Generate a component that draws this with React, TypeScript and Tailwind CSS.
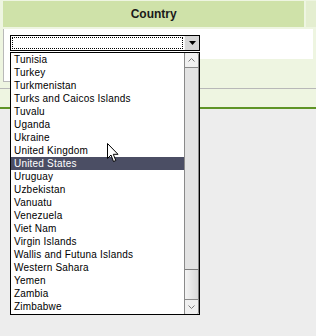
import React from "react";

const countries = [
  "Tunisia",
  "Turkey",
  "Turkmenistan",
  "Turks and Caicos Islands",
  "Tuvalu",
  "Uganda",
  "Ukraine",
  "United Kingdom",
  "United States",
  "Uruguay",
  "Uzbekistan",
  "Vanuatu",
  "Venezuela",
  "Viet Nam",
  "Virgin Islands",
  "Wallis and Futuna Islands",
  "Western Sahara",
  "Yemen",
  "Zambia",
  "Zimbabwe",
];

function Chevron({ up }: { up?: boolean }) {
  return (
    <svg width="7" height="4" viewBox="0 0 7 4" className="block">
      <path
        d={up ? "M0.5 3.5 L3.5 0.5 L6.5 3.5" : "M0.5 0.5 L3.5 3.5 L6.5 0.5"}
        fill="none"
        stroke="#7a7a7a"
        strokeWidth="1"
      />
    </svg>
  );
}

export default function App() {
  return (
    <div className="relative w-[316px] h-[336px] overflow-hidden bg-[#ededed] font-['Liberation_Sans',Arial,sans-serif] text-black">
      {/* table region */}
      <div className="h-[109px] bg-[#eef5e1] border-b-2 border-[#5f9426] pt-[1px] pl-[3px] flex flex-col">
        <div className="flex gap-[2px]">
          <div className="w-[310px] h-[26px] bg-[#cfe2a9] flex items-center justify-center text-[12px] font-bold text-[#1a1a1a]">
            Country
          </div>
          <div className="w-[10px] h-[26px] bg-[#e4eed0]" />
        </div>
        <div className="mt-[2px] w-[310px] h-[30px] bg-white border-l border-[#b9b9b9] pt-[6px] pl-[6px]">
          {/* closed select */}
          <div className="w-[190px] h-[16px] border border-black bg-white flex">
            <div className="flex-1 m-[1px] border border-dotted border-black" />
            <div className="w-[15px] h-full bg-[#d6d6d6] border-l border-[#f4f4f4] flex items-center justify-center">
              <svg width="7" height="4" viewBox="0 0 7 4">
                <path d="M0 0 L7 0 L3.5 4 Z" fill="#000" />
              </svg>
            </div>
          </div>
        </div>
        <div className="w-[7px] h-[23px] bg-white border-l border-b border-[#b9b9b9]" />
        <div className="mt-[6px] h-px bg-[#b8b8b8] -ml-[3px]" />
      </div>

      {/* open list */}
      <div className="absolute left-[10px] top-[52px] w-[190px] h-[263px] border border-black bg-white flex">
        <div className="flex-1 flex flex-col">
          {countries.map((c) => (
            <div
              key={c}
              className={
                "h-[13px] pl-[3px] pt-[1px] text-[10px] leading-[12px] tracking-[0.2px] whitespace-nowrap " +
                (c === "United States" ? "bg-[#4b4e64] text-white" : "")
              }
            >
              {c}
            </div>
          ))}
        </div>
        <div className="w-[15px] h-full border-l border-[#8a8a8a] bg-[#e3e3e3] flex flex-col">
          <div className="h-[15px] bg-[#f0f0f0] border-b border-r border-[#8a8a8a] rounded-t-[2px] flex items-center justify-center">
            <Chevron up />
          </div>
          <div className="flex-1 border-r border-[#8a8a8a]" />
          <div className="h-[30px] border-t border-r border-[#7d7d7d] bg-gradient-to-r from-[#f3f3f3] via-[#e6e6e6] to-[#d9d9d9]" />
          <div className="h-[15px] bg-[#f0f0f0] border-t border-r border-[#8a8a8a] rounded-b-[2px] flex items-center justify-center">
            <Chevron />
          </div>
        </div>
      </div>

      {/* mouse pointer */}
      <svg
        className="absolute left-[107px] top-[143px]"
        width="13"
        height="20"
        viewBox="0 0 13 20"
      >
        <path
          d="M0.5 0.5 L0.5 15.5 L4 12 L6.5 18.5 L8.8 17.5 L6.3 11.3 L11 11.3 Z"
          fill="#fff"
          stroke="#000"
          strokeWidth="1"
          strokeLinejoin="miter"
        />
      </svg>
    </div>
  );
}
